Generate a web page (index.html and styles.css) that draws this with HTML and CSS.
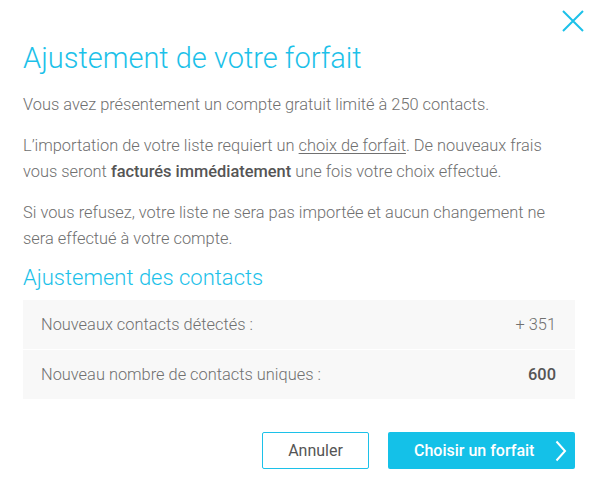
FILE: index.html
```html
<!DOCTYPE html>
<html lang="fr">
<head>
<meta charset="utf-8">
<link rel="stylesheet" href="styles.css">
</head>
<body>
<div class="modal">
  <button class="close" aria-label="Fermer">
    <svg width="22" height="22" viewBox="0 0 22 22"><path d="M1 1 L21 21 M21 1 L1 21" stroke="#1cc1e9" stroke-width="2" fill="none"/></svg>
  </button>
  <h1 class="title">Ajustement de votre forfait</h1>
  <p class="text">Vous avez présentement un compte gratuit limité à 250 contacts.</p>
  <p class="text">L’importation de votre liste requiert un <a class="link" href="#">choix de forfait</a>. De nouveaux frais vous seront <strong>facturés immédiatement</strong> une fois votre choix effectué.</p>
  <p class="text">Si vous refusez, votre liste ne sera pas importée et aucun changement ne sera effectué à votre compte.</p>
  <h2 class="subtitle">Ajustement des contacts</h2>
  <div class="table">
    <div class="row"><span>Nouveaux contacts détectés :</span><span>+ 351</span></div>
    <div class="row"><span>Nouveau nombre de contacts uniques :</span><strong>600</strong></div>
  </div>
  <div class="actions">
    <button class="btn btn-secondary">Annuler</button>
    <button class="btn btn-primary"><span>Choisir un forfait</span>
      <svg width="12" height="22" viewBox="0 0 12 22"><path d="M1.5 1.5 L10 11 L1.5 20.5" stroke="#fff" stroke-width="2" fill="none"/></svg>
    </button>
  </div>
</div>
</body>
</html>
```
FILE: styles.css
```css
* { box-sizing: border-box; }
html, body { margin: 0; padding: 0; background: #fff; }
body { font-family: Roboto, "Noto Sans", sans-serif; font-weight: 300; color: #707070; }
.modal { position: relative; width: 597px; height: 489px; padding: 40px 22px 0 23px; }
.close { position: absolute; top: 10px; right: 13px; width: 22px; height: 22px; padding: 0; border: 0; background: none; display: flex; }
.title { margin: 0 0 16px; font-size: 29px; line-height: 36px; font-weight: 300; color: #1cc1e9; }
.text { margin: 0 0 15px; max-width: 535px; font-size: 16.4px; line-height: 26px; }
.text strong { font-weight: 500; color: #555; }
.link { color: #707070; text-decoration: underline; text-underline-offset: 2px; }
.subtitle { margin: -3px 0 8px; font-size: 22px; line-height: 28px; font-weight: 300; color: #1cc1e9; }
.table { display: flex; flex-direction: column; gap: 1px; }
.row { display: flex; justify-content: space-between; align-items: center; height: 49px; padding: 0 19px 0 18px; background: #f8f8f8; font-size: 16.4px; }
.row strong { font-weight: 500; color: #555; font-size: 16.4px; }
.actions { display: flex; justify-content: flex-end; gap: 19px; margin-top: 33px; }
.btn { height: 37px; border-radius: 2px; font-family: Roboto, sans-serif; font-size: 16px; cursor: pointer; }
.btn-secondary { width: 107px; background: #fff; border: 1px solid #1cc1e9; color: #555; font-weight: 400; }
.btn-primary { width: 187px; background: #14c1e8; border: 0; color: #fff; font-weight: 500; display: flex; align-items: center; justify-content: space-between; padding: 0 8px 0 26px; }
```
